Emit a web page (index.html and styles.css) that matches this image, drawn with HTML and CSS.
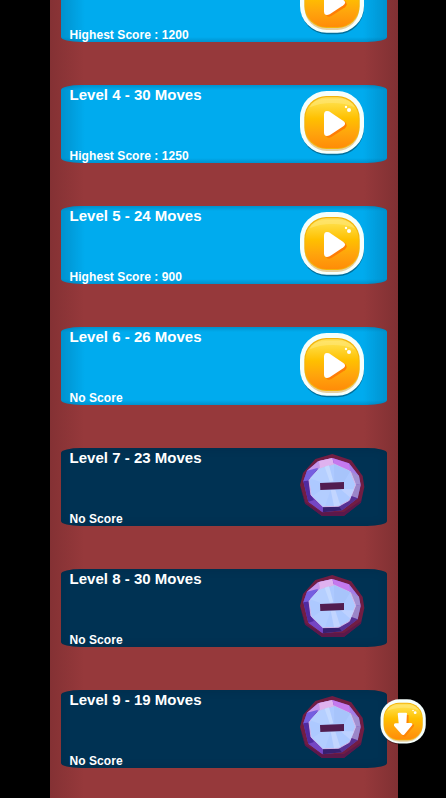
FILE: index.html
```
<!DOCTYPE html>
<html lang="en">
<head>
<meta charset="utf-8">
<title>Levels</title>
<link rel="stylesheet" href="styles.css">
</head>
<body>
<svg class="defs" aria-hidden="true">
  <defs>
    <linearGradient id="gold" x1="0" y1="0" x2="0" y2="1">
      <stop offset="0" stop-color="#ffe05a"/>
      <stop offset=".14" stop-color="#ffda3c"/>
      <stop offset=".42" stop-color="#ffc000"/>
      <stop offset=".7" stop-color="#ffa50c"/>
      <stop offset="1" stop-color="#ff8c08"/>
    </linearGradient>
    <symbol id="button" viewBox="0 0 225 225">
      <rect x="17" y="24" width="190" height="187" rx="80" fill="#000" opacity=".35"/>
      <rect x="15" y="18" width="192" height="188" rx="80" fill="#f5fffc"/>
      <rect x="29" y="40" width="164" height="158" rx="66" fill="#e5cfa0"/>
      <rect x="28" y="33" width="166" height="159" rx="66" fill="#f3b40c"/>
      <rect x="31" y="37" width="160" height="152" rx="63" fill="url(#gold)"/>
      <path d="M44 67Q56 42 90 42H134Q166 42 180 67Q150 54 112 54T44 67Z" fill="#ffec87" opacity=".45"/>
      <circle cx="162" cy="75" r="6" fill="#fff"/>
      <circle cx="153" cy="66" r="3.5" fill="#fff"/>
    </symbol>
    <symbol id="play" viewBox="0 0 225 225">
      <use href="#button"/>
      <path d="M94 84Q101 80 109 85L150 112Q160 121 150 130L109 156Q94 163 93 148Z" fill="#ff7d05"/>
      <path d="M87 88Q88 74 102 79L144 107Q156 115 145 124L104 151Q88 157 87 143Z" fill="#fff"/>
    </symbol>
    <symbol id="down" viewBox="0 0 225 225">
      <use href="#button"/>
      <path d="M99 85H134V123H154Q161 127 155 135L121 176Q116 180 110 175L80 137Q78 130 86 127H99Z" fill="#ff8505"/>
      <path d="M88 80Q88 75 94 75H123Q129 75 127 81L125 119H145Q154 122 148 130L116 168Q110 173 104 167L73 132Q69 122 79 120H92Z" fill="#fff"/>
    </symbol>
    <symbol id="gem" viewBox="0 0 225 225">
      <path d="M112 12L169 31L203 78L208 111L198 157L147 197L81 198L31 160L15 105L24 69L61 27Z" fill="#711d43"/>
      <path d="M15 108L31 157L81 187L147 186L199 151L198 158L147 198L81 198L30 161Z" fill="#5c184b"/>
      <path d="M112 24L162 40L192 78L197 105L188 145L141 181L83 187L40 155L25 94L36 62L69 34Z" fill="#7049bd"/>
      <path d="M112 24V42L72 56L52 64L36 62L69 34Z" fill="#c696eb"/>
      <path d="M72 33L112 24L117 42L75 55Z" fill="#dfb2ef"/>
      <path d="M112 24L162 40L171 64L153 58L117 42Z" fill="#c579ee"/>
      <path d="M162 40L192 78L180 102L166 64Z" fill="#a47ee6"/>
      <path d="M166 64L192 78L197 105L180 102Z" fill="#a291d2"/>
      <path d="M180 102L197 105L188 145L160 135Z" fill="#9b86c8"/>
      <path d="M160 135L188 145L141 181L132 169Z" fill="#573194"/>
      <path d="M84 170L132 169L141 181L83 187Z" fill="#37206f"/>
      <path d="M84 170L57 150L40 155L83 187Z" fill="#7546c4"/>
      <path d="M45 133L57 150L40 155L25 94L42 91Z" fill="#512aa0"/>
      <path d="M42 91L25 94L36 62L70 53Z" fill="#755ee0"/>
      <path d="M72 56L117 42L166 64L182 104L163 151L131 169L84 170L48 135L42 91Z" fill="#adc9ff" stroke="#dfbee9" stroke-width="2.5"/>
      <path d="M72 56L98 48L107 97L82 98L45 85Z" fill="#b5cfff"/>
      <path d="M89 50L102 46L115 94L105 96Z" fill="#c4d9ff"/>
      <path d="M80 119L107 119L91 168L84 170L52 138Z" fill="#b3cdff"/>
      <path d="M107 119H121L136 166L117 169Z" fill="#c2d5ff"/>
      <path d="M136 117L177 118L166 143Z" fill="#bdd1ff"/>
      <path d="M117 42L166 64L147 95L118 94Z" fill="#a7c4fb"/>
      <path d="M75 99L147 96L147 117L76 120Z" fill="#521d50"/>
    </symbol>
  </defs>
</svg>
<main class="levels">
  <article class="card"><div class="info"><h2></h2><p>Highest Score : 1200</p></div><svg class="icon"><use href="#play"/></svg></article>
  <article class="card"><div class="info"><h2>Level 4 - 30 Moves</h2><p>Highest Score : 1250</p></div><svg class="icon"><use href="#play"/></svg></article>
  <article class="card"><div class="info"><h2>Level 5 - 24 Moves</h2><p>Highest Score : 900</p></div><svg class="icon"><use href="#play"/></svg></article>
  <article class="card"><div class="info"><h2>Level 6 - 26 Moves</h2><p>No Score</p></div><svg class="icon"><use href="#play"/></svg></article>
  <article class="card locked"><div class="info"><h2>Level 7 - 23 Moves</h2><p>No Score</p></div><svg class="icon"><use href="#gem"/></svg></article>
  <article class="card locked"><div class="info"><h2>Level 8 - 30 Moves</h2><p>No Score</p></div><svg class="icon"><use href="#gem"/></svg></article>
  <article class="card locked"><div class="info"><h2>Level 9 - 19 Moves</h2><p>No Score</p></div><svg class="icon"><use href="#gem"/></svg></article>
</main>
<svg class="scroll-down"><use href="#down"/></svg>
</body>
</html>
```
FILE: styles.css
```
* { box-sizing: border-box; }
body {
  margin: 0;
  height: 798px;
  overflow: hidden;
  background: #000;
  color: #fff;
  font-family: "Liberation Sans", Arial, sans-serif;
}
.defs { display: block; width: 0; height: 0; }
.levels {
  display: flex;
  flex-direction: column;
  gap: 43px;
  width: 348px;
  height: 834px;
  margin: -36px 0 0 50px;
  padding: 0 11px 0 10.5px;
  background: linear-gradient(90deg, #843134, #96393b 34px, #96393b 314px, #803033);
}
.card {
  display: flex;
  flex: none;
  justify-content: space-between;
  height: 78px;
  padding: 0 18px 0 9px;
  border-radius: 20px / 5px;
  background:
    linear-gradient(90deg, rgba(0, 45, 80, .2), transparent 24px, transparent calc(100% - 24px), rgba(0, 45, 80, .2)),
    linear-gradient(rgba(0, 45, 80, .2), transparent 5px, transparent calc(100% - 5px), rgba(0, 45, 80, .2)),
    #00abee;
}
.locked { background: #003253; box-shadow: inset 0 0 10px rgba(0, 20, 35, .15); }
.info {
  display: flex;
  flex-direction: column;
  justify-content: space-between;
  font-weight: bold;
  white-space: nowrap;
}
.info h2 { margin: 2px 0 0; font-size: 15px; line-height: 16px; letter-spacing: .02px; }
.info p { margin: 0; font-size: 12px; line-height: 13px; letter-spacing: .06px; }
.icon { width: 75px; height: 75px; margin-right: -1px; }
.locked .icon { margin-top: 2px; }
.scroll-down {
  position: absolute;
  left: 377px;
  top: 695px;
  width: 53px;
  height: 53px;
}
```
